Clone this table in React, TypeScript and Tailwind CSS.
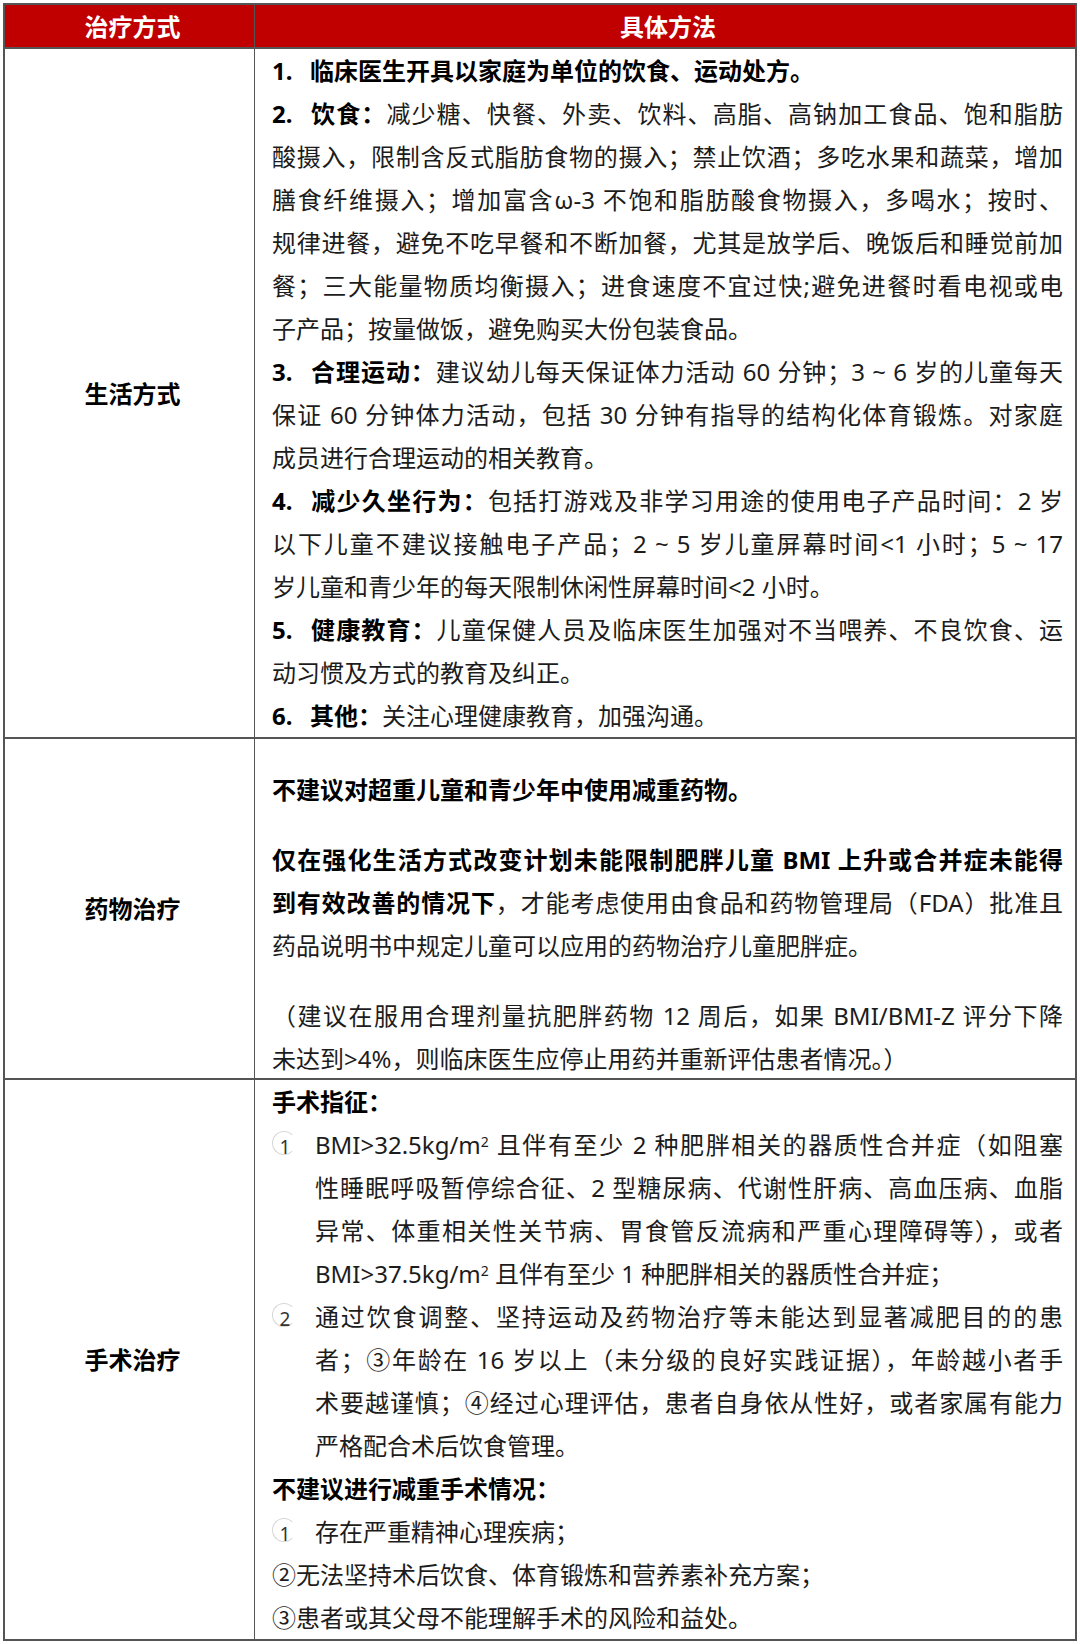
import React from "react";

const J = ({ children }: { children: React.ReactNode }) => (
  <div className="text-justify [text-align-last:justify]">{children}</div>
);
const L = ({ children }: { children: React.ReactNode }) => <div>{children}</div>;
const B = ({ children }: { children: React.ReactNode }) => (
  <span className="font-bold text-black">{children}</span>
);
const Num = ({ n }: { n: string }) => (
  <span className="inline-block w-[38px] font-bold text-black">{n}</span>
);
const Circ = ({ n }: { n: string }) => (
  <div className="w-[43px] shrink-0 h-[43px] flex items-center">
    <span className="relative w-[24px] h-[24px] rounded-full border border-[#d6d6d6] border-r-transparent flex items-center justify-center -mt-[4px]">
      <span className="text-[19px] leading-none text-[#333] mt-[10px] ml-[2px]">{n}</span>
    </span>
  </div>
);

export default function App() {
  return (
    <div className="w-[1080px] h-[1644px] bg-white pt-[3px] pl-[3px] [font-family:'Noto_Sans','Noto_Sans_CJK_SC',sans-serif] text-[24px] leading-[43px] text-[#1c1c1c]">
      <div className="w-[1074px] border-2 border-[#555]">
        {/* header */}
        <div className="flex h-[44px] bg-[#c00000] border-b-2 border-[#555] text-white font-bold">
          <div className="w-[250px] border-r border-[#555] flex items-center justify-center pl-[6px]">治疗方式</div>
          <div className="flex-1 flex items-center justify-center pl-[6px]">具体方法</div>
        </div>

        {/* row 1 */}
        <div className="flex border-b-2 border-[#555]">
          <div className="w-[250px] border-r border-[#555] flex items-center justify-center pl-[6px] font-bold text-black">生活方式</div>
          <div className="flex-1 pl-[17px] pr-[12px]">
            <L><B><Num n="1." />临床医生开具以家庭为单位的饮食、运动处方。</B></L>
            <J><Num n="2." /><B>饮食：</B>减少糖、快餐、外卖、饮料、高脂、高钠加工食品、饱和脂肪</J>
            <J>酸摄入，限制含反式脂肪食物的摄入；禁止饮酒；多吃水果和蔬菜，增加</J>
            <J>膳食纤维摄入；增加富含ω-3 不饱和脂肪酸食物摄入，多喝水；按时、</J>
            <J>规律进餐，避免不吃早餐和不断加餐，尤其是放学后、晚饭后和睡觉前加</J>
            <J>餐；三大能量物质均衡摄入；进食速度不宜过快;避免进餐时看电视或电</J>
            <L>子产品；按量做饭，避免购买大份包装食品。</L>
            <J><Num n="3." /><B>合理运动：</B>建议幼儿每天保证体力活动 60 分钟；3 ~ 6 岁的儿童每天</J>
            <J>保证 60 分钟体力活动，包括 30 分钟有指导的结构化体育锻炼。对家庭</J>
            <L>成员进行合理运动的相关教育。</L>
            <J><Num n="4." /><B>减少久坐行为：</B>包括打游戏及非学习用途的使用电子产品时间：2 岁</J>
            <J>以下儿童不建议接触电子产品；2 ~ 5 岁儿童屏幕时间&lt;1 小时；5 ~ 17</J>
            <L>岁儿童和青少年的每天限制休闲性屏幕时间&lt;2 小时。</L>
            <J><Num n="5." /><B>健康教育：</B>儿童保健人员及临床医生加强对不当喂养、不良饮食、运</J>
            <L>动习惯及方式的教育及纠正。</L>
            <L><Num n="6." /><B>其他：</B>关注心理健康教育，加强沟通。</L>
          </div>
        </div>

        {/* row 2 */}
        <div className="flex border-b-2 border-[#555] h-[341px]">
          <div className="w-[250px] border-r border-[#555] flex items-center justify-center pl-[6px] font-bold text-black">药物治疗</div>
          <div className="flex-1 pl-[17px] pr-[12px] pt-[29px]">
            <L><B>不建议对超重儿童和青少年中使用减重药物。</B></L>
            <div className="mt-[27px]">
              <J><B>仅在强化生活方式改变计划未能限制肥胖儿童 BMI 上升或合并症未能得</B></J>
              <J><B>到有效改善的情况下</B>，才能考虑使用由食品和药物管理局（FDA）批准且</J>
              <L>药品说明书中规定儿童可以应用的药物治疗儿童肥胖症。</L>
            </div>
            <div className="mt-[27px]">
              <J>（建议在服用合理剂量抗肥胖药物 12 周后，如果 BMI/BMI-Z 评分下降</J>
              <L>未达到&gt;4%，则临床医生应停止用药并重新评估患者情况。）</L>
            </div>
          </div>
        </div>

        {/* row 3 */}
        <div className="flex">
          <div className="w-[250px] border-r border-[#555] flex items-center justify-center pl-[6px] font-bold text-black">手术治疗</div>
          <div className="flex-1 pl-[17px] pr-[12px]">
            <L><B>手术指征：</B></L>
            <div className="flex">
              <Circ n="1" />
              <div className="flex-1">
                <J>BMI&gt;32.5kg/m<sup className="text-[14px] leading-none">2</sup> 且伴有至少 2 种肥胖相关的器质性合并症（如阻塞</J>
                <J>性睡眠呼吸暂停综合征、2 型糖尿病、代谢性肝病、高血压病、血脂</J>
                <J>异常、体重相关性关节病、胃食管反流病和严重心理障碍等），或者</J>
                <L>BMI&gt;37.5kg/m<sup className="text-[14px] leading-none">2</sup> 且伴有至少 1 种肥胖相关的器质性合并症；</L>
              </div>
            </div>
            <div className="flex">
              <Circ n="2" />
              <div className="flex-1">
                <J>通过饮食调整、坚持运动及药物治疗等未能达到显著减肥目的的患</J>
                <J>者；③年龄在 16 岁以上（未分级的良好实践证据），年龄越小者手</J>
                <J>术要越谨慎；④经过心理评估，患者自身依从性好，或者家属有能力</J>
                <L>严格配合术后饮食管理。</L>
              </div>
            </div>
            <L><B>不建议进行减重手术情况：</B></L>
            <div className="flex">
              <Circ n="1" />
              <div className="flex-1">
                <L>存在严重精神心理疾病；</L>
              </div>
            </div>
            <L>②无法坚持术后饮食、体育锻炼和营养素补充方案；</L>
            <L>③患者或其父母不能理解手术的风险和益处。</L>
          </div>
        </div>
      </div>
    </div>
  );
}
